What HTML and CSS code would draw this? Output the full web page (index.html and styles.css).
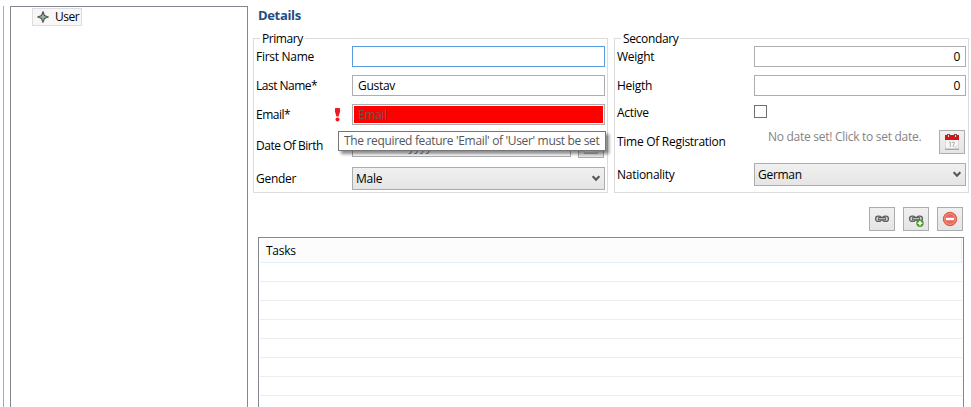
FILE: index.html
```html
<!DOCTYPE html>
<html lang="en">
<head>
<meta charset="utf-8">
<title>User</title>
<link rel="stylesheet" href="styles.css">
</head>
<body>
<svg width="0" height="0" class="defs">
  <defs>
    <g id="calendar">
      <rect x="1" y="3" width="14" height="12" fill="#f6f6f6"/>
      <path d="M1.5 6V15M14.5 6V15" stroke="#dadada"/>
      <rect x="1" y="14.5" width="14" height="1.5" fill="#a8a8a8"/>
      <rect x="1" y="1" width="14" height="5" fill="#dc1216"/>
      <path d="M3 0h3v3H3zM10 0h3v3h-3z" fill="#8d3a3a"/>
      <path d="M4 1h1v2H4zM11 1h1v2h-1z" fill="#f4dada"/>
      <path d="M5 8.5L6.3 8V13M7.8 8.3H10.5L9 13" fill="none" stroke="#b0b0b0"/>
      <path d="M10.5 12.5L12 13.5L13.5 11" fill="none" stroke="#d4d4d4"/>
    </g>
    <g id="link" fill="none">
      <rect x="1.6" y="5.1" width="5.8" height="5.3" rx="2.5" fill="#d0d0d0" stroke="#606060" stroke-width="1.3"/>
      <rect x="8.6" y="5.1" width="5.8" height="5.3" rx="2.5" fill="#d0d0d0" stroke="#606060" stroke-width="1.3"/>
      <path d="M4 7.75H12" stroke="#505050" stroke-width="3"/>
      <path d="M4.6 7.75H11.4" stroke="#ddd"/>
    </g>
  </defs>
</svg>
<div class="app">
  <aside class="tree">
    <div class="node">
      <svg width="12" height="12" viewBox="0 0 12 12"><path d="M6 .8L7.5 4.5L11.2 6L7.5 7.5L6 11.2L4.5 7.5L.8 6L4.5 4.5Z" fill="#8fbd91" stroke="#555059" stroke-width="1.1"/></svg>
      <span>User</span>
    </div>
  </aside>
  <main class="details">
    <h1>Details</h1>
    <div class="groups">
      <section class="group primary">
        <div class="legend"><span>Primary</span></div>
        <div class="row r1"><label>First Name</label><div class="input focus"></div></div>
        <div class="row r2"><label class="tight">Last Name*</label><div class="input">Gustav</div></div>
        <div class="row r3"><label class="tight">Email*</label>
          <svg class="error" width="7" height="14" viewBox="0 0 7 14"><path d="M1.2 0H5.8L6.2 3L4.6 8.5H2.4L.8 3Z" fill="#ed1c24"/><circle cx="3.5" cy="11.4" r="2" fill="#ed1c24"/></svg>
          <div class="input invalid"><span>Email</span></div></div>
        <div class="row r4"><label class="tight">Date Of Birth</label><div class="input date">dd.mm.yyyy</div>
          <div class="button"><svg width="16" height="16"><use href="#calendar"/></svg></div></div>
        <div class="row r5"><label>Gender</label><div class="select"><span>Male</span><svg width="8" height="7" viewBox="0 0 8 7"><path d="M.7 1.2L4 4.8L7.3 1.2" fill="none" stroke="#555" stroke-width="2"/></svg></div></div>
        <div class="tooltip">The required feature 'Email' of 'User' must be set</div>
      </section>
      <section class="group secondary">
        <div class="legend"><span>Secondary</span></div>
        <div class="row r1"><label>Weight</label><div class="input number">0</div></div>
        <div class="row r2"><label>Heigth</label><div class="input number">0</div></div>
        <div class="row r3"><label>Active</label><div class="checkbox"></div></div>
        <div class="row r4"><label>Time Of Registration</label><div class="unset">No date set! Click to set date.</div>
          <div class="button"><svg width="16" height="16"><use href="#calendar"/></svg></div></div>
        <div class="row r5"><label>Nationality</label><div class="select"><span>German</span><svg width="8" height="7" viewBox="0 0 8 7"><path d="M.7 1.2L4 4.8L7.3 1.2" fill="none" stroke="#555" stroke-width="2"/></svg></div></div>
      </section>
    </div>
    <div class="toolbar">
      <div class="button"><svg width="16" height="16"><use href="#link"/></svg></div>
      <div class="button"><svg width="16" height="16"><use href="#link"/><circle cx="12" cy="12.2" r="3.7" fill="#4d9a2f"/><path d="M12 9.9V14.5M9.7 12.2H14.3" stroke="#fff" stroke-width="1.6"/></svg></div>
      <div class="button"><svg width="16" height="16"><circle cx="8" cy="8" r="6.7" fill="#e8685c" stroke="#dc5347"/><circle cx="8" cy="8" r="5.4" fill="none" stroke="#f3a096" stroke-width=".8"/><rect x="4" y="6.8" width="8" height="2.4" fill="#fff"/></svg></div>
    </div>
    <div class="table">
      <div class="thead"><span>Tasks</span></div>
      <div class="tr"></div><div class="tr"></div><div class="tr"></div><div class="tr"></div>
      <div class="tr"></div><div class="tr"></div><div class="tr"></div><div class="tr"></div>
    </div>
  </main>
</div>
</body>
</html>
```
FILE: styles.css
```css
* { box-sizing: border-box; }
body {
  margin: 0;
  background: #fff;
  color: #000;
  font: 12px/16px "Open Sans", "Noto Sans", sans-serif;
  letter-spacing: -0.28px;
  overflow: hidden;
}
svg { display: block; flex: none; }
.defs { display: none; }
.app { display: flex; height: 407px; padding: 6px 0 0 3px; overflow: hidden; }
.app::before { content: ""; width: 1px; margin-right: 6px; background: #a9a9a9; }
.tree { width: 238px; border: 1px solid #828790; border-bottom: 0; padding: 1px 0 0 21px; }
.node {
  display: flex; align-items: center; gap: 6px;
  width: 50px; height: 18px; padding-left: 4px;
  background: #f7f7f7; border: 1px solid #dedede;
  letter-spacing: -0.5px;
}
.details { width: 716px; margin-left: 5px; }
h1 {
  margin: 1px 0 0 5px; height: 31px;
  font-size: 13px; line-height: 17px; font-weight: 700; letter-spacing: -0.35px;
  color: #1f4e84;
}
.groups { display: flex; gap: 6px; }
.group { position: relative; width: 355px; height: 155px; border: 1px solid #dcdcdc; }
.legend { display: flex; height: 7px; padding-left: 6px; letter-spacing: -0.35px; }
.legend span { height: 16px; margin-top: -8px; padding: 0 2px; background: #fff; }
.primary .legend { letter-spacing: -0.45px; }
.row { display: flex; align-items: center; height: 21px; margin: 0 2px 8px 2px; }
.row label { width: 96px; flex: none; white-space: nowrap; }
.row .tight { letter-spacing: -0.5px; }
.secondary label { width: 137px; }
.input { flex: 1; height: 21px; border: 1px solid #abadb3; padding: 2px 5px 0; line-height: 16px; }
.focus { border-color: #569de5; }
.number { text-align: right; }
.invalid { padding: 1px; }
.invalid span { display: block; height: 17px; padding: 1px 4px 0; background: #f00; color: #7a5050; }
.error { margin: 0 11px 0 -18px; }
.primary .r4 { height: 24px; margin-top: 9px; margin-bottom: 9px; }
.r5 { height: 23px; }
.date { flex: none; width: 219px; color: #777; padding-left: 14px; }
.date + .button { margin-left: 7px; }
.button {
  display: flex; align-items: center; justify-content: center;
  width: 26px; height: 24px; flex: none;
  border: 1px solid #acacac; background: linear-gradient(#f0f0f0, #e5e5e5);
}
.select {
  display: flex; align-items: center; justify-content: space-between;
  flex: 1; height: 23px; padding: 0 4px 0 3px;
  border: 1px solid #acacac; background: linear-gradient(#f0f0f0, #e5e5e5);
}
.checkbox { width: 13px; height: 13px; border: 1px solid #707070; }
.secondary .r3 { height: 13px; margin-top: 9px; margin-bottom: 12px; }
.secondary .r3 label { padding-top: 2px; }
.secondary .r4 { height: 24px; margin-bottom: 9px; margin-right: 3px; }
.unset { flex: 1; padding: 0 0 10px 14px; color: #838383; white-space: nowrap; }
.tooltip {
  position: absolute; left: 84px; top: 92px; width: 268px; height: 20px;
  padding: 1px 0 0 5px; white-space: nowrap; letter-spacing: -0.34px;
  color: #575757; background: #fff; border: 1px solid #767676;
  box-shadow: 3px 3px 3px rgba(0, 0, 0, .45);
}
.toolbar { display: flex; justify-content: flex-end; gap: 8px; margin: 14px 6px 6px 0; }
.table { margin: 0 5px; height: 180px; border: 1px solid #828790; padding: 1px 1px 0 1px; }
.thead { height: 24px; padding: 4px 0 0 6px; background: #fcfcfc; border-right: 1px solid #e5effa; border-bottom: 1px solid #e2eefa; }
.tr { height: 19px; border-bottom: 1px solid #ededed; }
```
